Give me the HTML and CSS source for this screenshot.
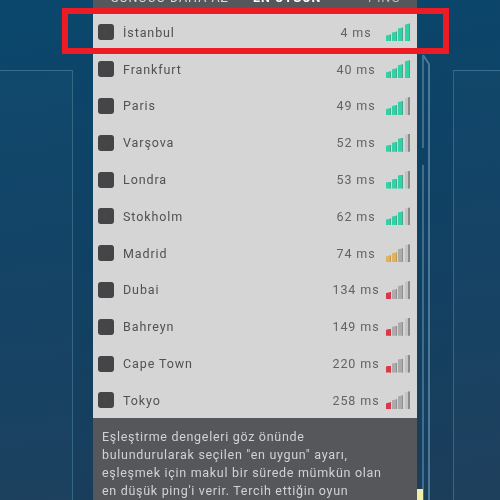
FILE: index.html
```html
<!DOCTYPE html>
<html lang="tr">
<head>
    <meta charset="UTF-8">
    <meta name="viewport" content="width=device-width, initial-scale=1.0">
    <title>Sunucu seçimi</title>
    <link rel="stylesheet" href="styles.css">
</head>
<body>
    <div class="bg-box bg-left"></div>
    <div class="bg-box bg-right"></div>
    <svg class="bg-lines" width="12" height="500" viewBox="0 0 12 500">
        <path d="M2 55V148M2 165V500" fill="none" stroke="#3f6f8e" stroke-width="2"/>
        <path d="M2 55L8 64V500" fill="none" stroke="#4a7896" stroke-width="2"/>
    </svg>

    <div class="panel">
        <div class="tabs">
            <span class="tab-one">SUNUCU DAHA AZ</span>
            <span class="tab-two">EN UYGUN</span>
            <span class="tab-three">PING</span>
        </div>
        <div class="list">
            <div class="row"><span class="check"></span><span class="name">İstanbul</span><span class="ms">4 ms</span><span class="bars green b4"><i></i><i></i><i></i><i></i></span></div>
            <div class="row"><span class="check"></span><span class="name">Frankfurt</span><span class="ms">40 ms</span><span class="bars green b4"><i></i><i></i><i></i><i></i></span></div>
            <div class="row"><span class="check"></span><span class="name">Paris</span><span class="ms">49 ms</span><span class="bars green b3"><i></i><i></i><i></i><i></i></span></div>
            <div class="row"><span class="check"></span><span class="name">Varşova</span><span class="ms">52 ms</span><span class="bars green b3"><i></i><i></i><i></i><i></i></span></div>
            <div class="row"><span class="check"></span><span class="name">Londra</span><span class="ms">53 ms</span><span class="bars green b3"><i></i><i></i><i></i><i></i></span></div>
            <div class="row"><span class="check"></span><span class="name">Stokholm</span><span class="ms">62 ms</span><span class="bars green b3"><i></i><i></i><i></i><i></i></span></div>
            <div class="row"><span class="check"></span><span class="name">Madrid</span><span class="ms">74 ms</span><span class="bars yellow b2"><i></i><i></i><i></i><i></i></span></div>
            <div class="row"><span class="check"></span><span class="name">Dubai</span><span class="ms">134 ms</span><span class="bars red b1"><i></i><i></i><i></i><i></i></span></div>
            <div class="row"><span class="check"></span><span class="name">Bahreyn</span><span class="ms">149 ms</span><span class="bars red b1"><i></i><i></i><i></i><i></i></span></div>
            <div class="row"><span class="check"></span><span class="name">Cape Town</span><span class="ms">220 ms</span><span class="bars red b1"><i></i><i></i><i></i><i></i></span></div>
            <div class="row"><span class="check"></span><span class="name">Tokyo</span><span class="ms">258 ms</span><span class="bars red b1"><i></i><i></i><i></i><i></i></span></div>
        </div>
        <div class="note">
            Eşleştirme dengeleri göz önünde<br>
            bulundurularak seçilen "en uygun" ayarı,<br>
            eşleşmek için makul bir sürede mümkün olan<br>
            en düşük ping'i verir. Tercih ettiğin oyun
        </div>
    </div>

    <div class="marker"></div>
    <div class="highlight"></div>
</body>
</html>
```

FILE: styles.css
```css
body {
    margin: 0;
    height: 500px;
    overflow: hidden;
    position: relative;
    font-family: "Roboto", "Liberation Sans", sans-serif;
    background: linear-gradient(172deg, #0b476d 0%, #0f4164 45%, #1b3d5a 100%);
}

/* background */
.bg-box {
    position: absolute;
    top: 70px;
    height: 430px;
    border-top: 1px solid #3a6e8d;
    background: rgba(255, 255, 255, 0.02);
}
.bg-left {
    left: 0;
    width: 72px;
    border-right: 1px solid #336784;
}
.bg-right {
    left: 453px;
    width: 47px;
    border-left: 1px solid #336784;
}
.bg-lines {
    position: absolute;
    left: 421px;
    top: 0;
}

/* panel */
.panel {
    position: absolute;
    left: 93px;
    top: 0;
    width: 324px;
    height: 500px;
    display: flex;
    flex-direction: column;
    filter: blur(0.4px);
}
.tabs {
    height: 13px;
    background: #55575a;
    color: #dcdcdc;
    font-size: 12.5px;
    line-height: 1px;
    letter-spacing: 1px;
    display: flex;
    overflow: hidden;
}
.tabs span {
    margin-top: -3px;
}
.tabs .tab-one {
    margin-left: 18px;
    width: 142px;
}
.tab-two {
    font-weight: bold;
    color: #fff;
    width: 115px;
}
.tab-three {
    color: #bdbdbd;
}

.list {
    height: 404px;
    padding-top: 1px;
    background: #d5d5d5;
    display: flex;
    flex-direction: column;
}
.row {
    height: 36.8px;
    flex: none;
    display: flex;
    align-items: center;
    padding: 0 7px 0 5px;
    color: #515153;
    font-size: 12.5px;
    letter-spacing: 0.9px;
}
.check {
    width: 16px;
    height: 16px;
    border-radius: 3px;
    background: #454547;
    margin-right: 9px;
}
.name {
    flex: 1;
}
.ms {
    width: 52px;
    margin-right: 4px;
    text-align: center;
    color: #636365;
}

/* signal bars */
.bars {
    display: flex;
    align-items: flex-end;
    gap: 1px;
    width: 24px;
    height: 18px;
}
.bars i {
    width: 5px;
    border-right: 1px solid #8f8f8f;
    box-sizing: border-box;
    background: #ababab;
    clip-path: polygon(0 1px, 100% 0, 100% 100%, 0 100%);
}
.bars i:nth-child(1) { height: 7px; }
.bars i:nth-child(2) { height: 10px; }
.bars i:nth-child(3) { height: 14px; }
.bars i:nth-child(4) { height: 18px; margin-left: 1px; background: #c4c4c4; border-right: 2px solid #8a8a8a; }

.green.b4 i, .green.b4 i:nth-child(4), .green.b3 i:nth-child(-n+3) {
    background: #2fd3a6;
    border-right: 1px solid #4aa78f;
}
.yellow.b2 i:nth-child(-n+2) {
    background: #deb35c;
    border-right-color: #c29a52;
}
.red.b1 i:nth-child(1) {
    background: #d8394a;
    border-right-color: #d8394a;
}

.note {
    flex: 1;
    background: #55575a;
    color: #d2d2d2;
    font-size: 12.5px;
    line-height: 18px;
    letter-spacing: 0.7px;
    padding: 10px 9px 0;
    white-space: nowrap;
    overflow: hidden;
}

/* overlays */
.marker {
    position: absolute;
    left: 417px;
    top: 489px;
    width: 6px;
    height: 11px;
    background: #f0efaa;
}
.highlight {
    position: absolute;
    left: 62px;
    top: 8px;
    width: 375px;
    height: 34px;
    border: 6px solid #ed1c24;
}
```
